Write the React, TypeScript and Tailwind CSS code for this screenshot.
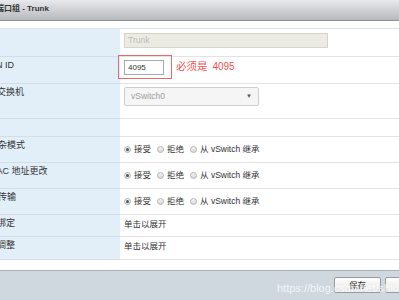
import React from "react";

const font = "font-['Liberation_Sans','Noto_Sans_CJK_SC',sans-serif]";

function Radio({ checked }: { checked?: boolean }) {
  return (
    <span className="flex h-[7px] w-[7px] items-center justify-center rounded-full border border-[#b4b4b4] bg-gradient-to-b from-[#f4f4f4] to-[#d8d8d8]">
      {checked && <span className="h-[3px] w-[3px] rounded-full bg-[#555]" />}
    </span>
  );
}

function RadioGroup() {
  return (
    <div className="flex items-center pt-[7px] text-[8.5px] leading-[11px] text-[#333]">
      <Radio checked />
      <span className="ml-[3px] mr-[6px]">接受</span>
      <Radio />
      <span className="ml-[3px] mr-[6px]">拒绝</span>
      <Radio />
      <span className="ml-[3px]">从 vSwitch 继承</span>
    </div>
  );
}

function Row({
  label,
  indent,
  h,
  children,
}: {
  label: string;
  indent?: boolean;
  h: string;
  children?: React.ReactNode;
}) {
  return (
    <div className={`flex ${h}`}>
      <div
        className={`w-[141px] shrink-0 border-b border-[#d3dfe7] bg-[#e2eff8] pt-[2px] text-[9px] leading-[12px] text-[#333] ${
          indent ? "pl-[10px]" : ""
        }`}
      >
        {label}
      </div>
      <div className="relative flex-1 border-b border-[#e3e3e3] bg-white pl-[4px]">{children}</div>
    </div>
  );
}

export default function App() {
  return (
    <div className={`relative h-[300px] w-[399px] overflow-hidden bg-white ${font}`}>
      <div className="ml-[-21px] flex w-[460px] flex-col">
        {/* title bar */}
        <div className="flex h-[21px] items-center border-b border-[#8e9094] bg-gradient-to-b from-[#e8eaed] to-[#b7b9bd] pb-[2px] pl-[1px] text-[8px] font-bold text-[#333]">
          编辑端口组 - Trunk
        </div>

        <div className="h-[7px] bg-white" />

        {/* form table */}
        <div className="border-t border-[#dbe4ea]">
          <Row label="名称" h="h-[28px]">
            <div className="mt-[4px] flex h-[15px] w-[204px] items-center border border-[#d4d4cc] bg-[#ebebe4] pl-[3px] text-[8.5px] text-[#bdbdbd]">
              Trunk
            </div>
          </Row>
          <Row label="VLAN ID" h="h-[27px]">
            <div className="flex items-center">
              <div className="mt-[3px] flex h-[15px] w-[40px] items-center border border-[#a9a9a9] bg-white pl-[3px] text-[8px] text-[#333]">
                4095
              </div>
              <span className="ml-[12px] mt-[2px] text-[10.5px] text-[#f2514f]">
                必须是 <span className="ml-[2px] text-[10px]">4095</span>
              </span>
            </div>
            <div className="absolute left-[-2px] top-[-2px] h-[24px] w-[54px] border border-[#e96a6a]" />
          </Row>
          <Row label="虚拟交换机" h="h-[35px]">
            <div className="mt-[3px] flex h-[19px] w-[135px] items-center justify-between rounded-[2px] border border-[#cfcfcf] bg-[#f5f5f5] pl-[6px] pr-[6px] text-[8.5px] text-[#9e9e9e]">
              <span>vSwitch0</span>
              <span className="text-[6px] text-[#555]">▼</span>
            </div>
          </Row>
          <Row label="安全" h="h-[18px]" />
          <Row label="混杂模式" indent h="h-[26px]">
            <RadioGroup />
          </Row>
          <Row label="MAC 地址更改" indent h="h-[26px]">
            <RadioGroup />
          </Row>
          <Row label="伪传输" indent h="h-[26px]">
            <RadioGroup />
          </Row>
          <Row label="NIC 绑定" h="h-[22px]">
            <div className="pt-[3px] text-[8.5px] leading-[12px] text-[#333]">单击以展开</div>
          </Row>
          <Row label="流量调整" h="h-[23px]">
            <div className="pt-[3px] text-[8.5px] leading-[12px] text-[#333]">单击以展开</div>
          </Row>
        </div>

        <div className="h-[10px] bg-white" />

        {/* footer */}
        <div className="flex h-[30px] items-start justify-end gap-[4px] border-t border-[#a9b0b6] bg-[#d0d8df] pr-[7px] pt-[6px]">
          <button className="flex h-[16px] w-[47px] items-center justify-center rounded-[2px] border border-[#9a9a9a] bg-gradient-to-b from-white to-[#e4e4e4] text-[8.5px] text-[#333]">
            保存
          </button>
          <button className="flex h-[16px] w-[47px] items-center justify-center rounded-[2px] border border-[#9a9a9a] bg-gradient-to-b from-white to-[#e4e4e4] text-[8.5px] text-[#333]">
            取消
          </button>
        </div>
        <div className="h-[3px] bg-[#4d4d4d]" />
      </div>

      {/* watermark */}
      <div className="absolute left-[277px] top-[280px] whitespace-nowrap text-[11px] text-white/75">
        https://blog.csdn.net/shidaying
      </div>
    </div>
  );
}
